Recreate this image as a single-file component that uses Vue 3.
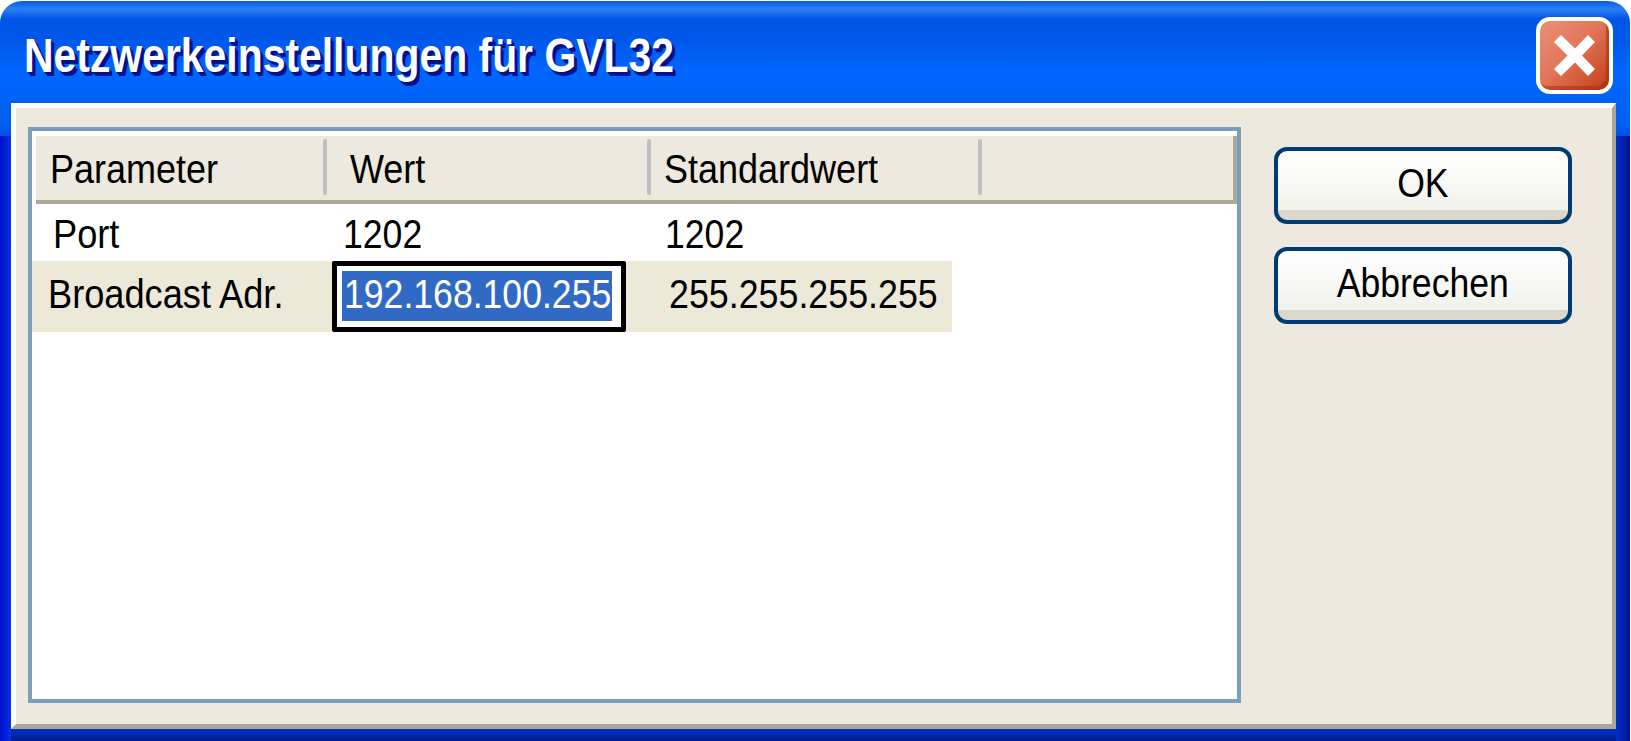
<template>
  <div class="window">
    <header class="titlebar">
      <h1 class="title"><span class="squeeze">Netzwerkeinstellungen für GVL32</span></h1>
      <button class="close" aria-label="Schließen">
        <svg width="42" height="42" viewBox="0 0 42 42">
          <polygon fill="#fff" points="0,7 7,0 21,13.5 34,0 41,7 28,20.5 41,34 34,41 21,27.5 7,41 0,34 13.5,20.5" />
        </svg>
      </button>
    </header>

    <main class="panel">
      <section class="table">
        <div class="thead">
          <div v-for="col in columns" :key="col.label" class="th" :class="col.cls">
            <span class="squeeze">{{ col.label }}</span>
          </div>
        </div>
        <div class="row port">
          <div class="cell c1"><span class="squeeze">Port</span></div>
          <div class="cell c2"><span class="squeeze">1202</span></div>
          <div class="cell c3"><span class="squeeze">1202</span></div>
        </div>
        <div class="row broadcast">
          <div class="cell c1"><span class="squeeze">Broadcast Adr.</span></div>
          <div class="cell c2 editor">
            <div class="selection"><span class="squeeze">192.168.100.255</span></div>
          </div>
          <div class="cell c3"><span class="squeeze">255.255.255.255</span></div>
        </div>
      </section>

      <aside class="actions">
        <button class="btn"><span class="squeeze">OK</span></button>
        <button class="btn"><span class="squeeze">Abbrechen</span></button>
      </aside>
    </main>
  </div>
</template>

<script setup>
const columns = [
  { label: 'Parameter', cls: 'h1' },
  { label: 'Wert', cls: 'h2' },
  { label: 'Standardwert', cls: 'h3' },
  { label: '', cls: 'h4' }
]
</script>

<style>
html, body { margin: 0; background: #fff; overflow: hidden; }
</style>

<style scoped>
* { box-sizing: border-box; }

.window {
  width: 1630px;
  height: 740px;
  margin-top: 1px;
  padding: 0 14px 12px 11px;
  display: flex;
  flex-direction: column;
  border-radius: 22px 22px 0 0;
  font-family: "Liberation Sans", Arial, sans-serif;
  color: #000;
  background:
    linear-gradient(180deg, #0a5ae6 0, #2b80f5 8px, #1a70f0 12px, #0055e5 18px, #0058ea 40px, #0066ff 70px, #005ff0 125px, #0050e0 135px) top / 100% 135px no-repeat,
    linear-gradient(90deg, #0010c8, #0632e6) left / 11px 100% no-repeat,
    linear-gradient(90deg, #0030c8, #001090) right / 14px 100% no-repeat,
    linear-gradient(180deg, #0032c4, #001a8c) bottom / 100% 12px no-repeat;
}

/* text in the shot is squashed sideways, so glyphs are taller than the font widths suggest */
.squeeze {
  display: inline-block;
  white-space: nowrap;
  transform: scaleX(0.89);
  transform-origin: left center;
}

.titlebar {
  height: 102px;
  flex: none;
  display: flex;
  align-items: center;
  justify-content: space-between;
}

.title {
  margin: 8px 0 0 13px;
  font-size: 48px;
  line-height: 56px;
  font-weight: 700;
  color: #fff;
  text-shadow: 2px 2px 0 #00138c, 4px 4px 0 #00138c;
}
.title .squeeze { transform: scaleX(0.852); }

.close {
  width: 77px;
  height: 77px;
  margin: 7px 3px 0 0;
  padding: 0;
  display: flex;
  align-items: center;
  justify-content: center;
  border: 4px solid #fff;
  border-radius: 14px;
  background: linear-gradient(135deg, #ea9079 0, #e2765a 45%, #c13c13 100%);
  box-shadow: inset -3px -4px 0 rgba(150, 40, 10, .45);
}

.panel {
  flex: 1;
  min-height: 0;
  display: flex;
  padding: 19px 0 21px 12px;
  background: #ede9de;
  border-style: solid;
  border-width: 5px 4px 5px 5px;
  border-color: #fff #aca899 #aca899 #fff;
}

.table {
  width: 1213px;
  flex: none;
  background: #fff;
  border: 4px solid #7b9ebd;
  padding-top: 5px;
}

.thead {
  height: 68px;
  display: flex;
  margin-left: 4px;
  background: #ede9de;
  border-bottom: 4px solid #aca899;
  border-right: 4px solid #aca899;
}

.th {
  position: relative;
  flex: none;
  font-size: 40px;
  line-height: 66px;
}
.th .squeeze { transform: scaleX(0.9); }
.c1 .squeeze { transform: scaleX(0.905); }
.broadcast .c3 .squeeze { transform: scaleX(0.895); }
.h1 { width: 291px; padding-left: 14px; }
.h2 { width: 324px; padding-left: 23px; }
.h3 { width: 331px; padding-left: 13px; }
.h4 { flex: 1; }

.th:not(.h4)::after {
  content: "";
  position: absolute;
  right: 0;
  top: 3px;
  width: 4px;
  height: 56px;
  border-radius: 2px;
  background: #c0c0c0;
}

.row {
  display: flex;
  font-size: 40px;
}
.port { height: 57px; line-height: 61px; }
.broadcast {
  width: 920px;
  height: 71px;
  line-height: 67px;
  background: #ece9d8;
}

.cell { flex: none; }
.c1 { width: 300px; }
.c2 { width: 294px; }
.c3 { flex: 1; }
.port .c1 { padding-left: 21px; }
.port .c2 { padding-left: 11px; }
.port .c3 { padding-left: 39px; }
.broadcast .c1 { padding-left: 16px; }
.broadcast .c3 { padding-left: 43px; }

.editor {
  padding: 5px 9px 5px 5px;
  background: #fff;
  border: 5px solid #000;
  border-radius: 2px;
}
.selection {
  height: 50px;
  padding-left: 2px;
  line-height: 46px;
  background: #316ac5;
  color: #fff;
  overflow: hidden;
}

.actions {
  margin: 20px 0 0 33px;
  display: flex;
  flex-direction: column;
  gap: 23px;
}

.btn {
  width: 298px;
  height: 77px;
  padding: 0 0 4px;
  border: 4px solid #003c74;
  border-radius: 13px;
  font: 40px "Liberation Sans", Arial, sans-serif;
  color: #000;
  background: linear-gradient(180deg, #fff 0, #fbfbf9 30%, #f2f2ec 100%) top / 100% 59px no-repeat, #dcd7cb;
}
.btn .squeeze { transform-origin: center center; }
</style>
